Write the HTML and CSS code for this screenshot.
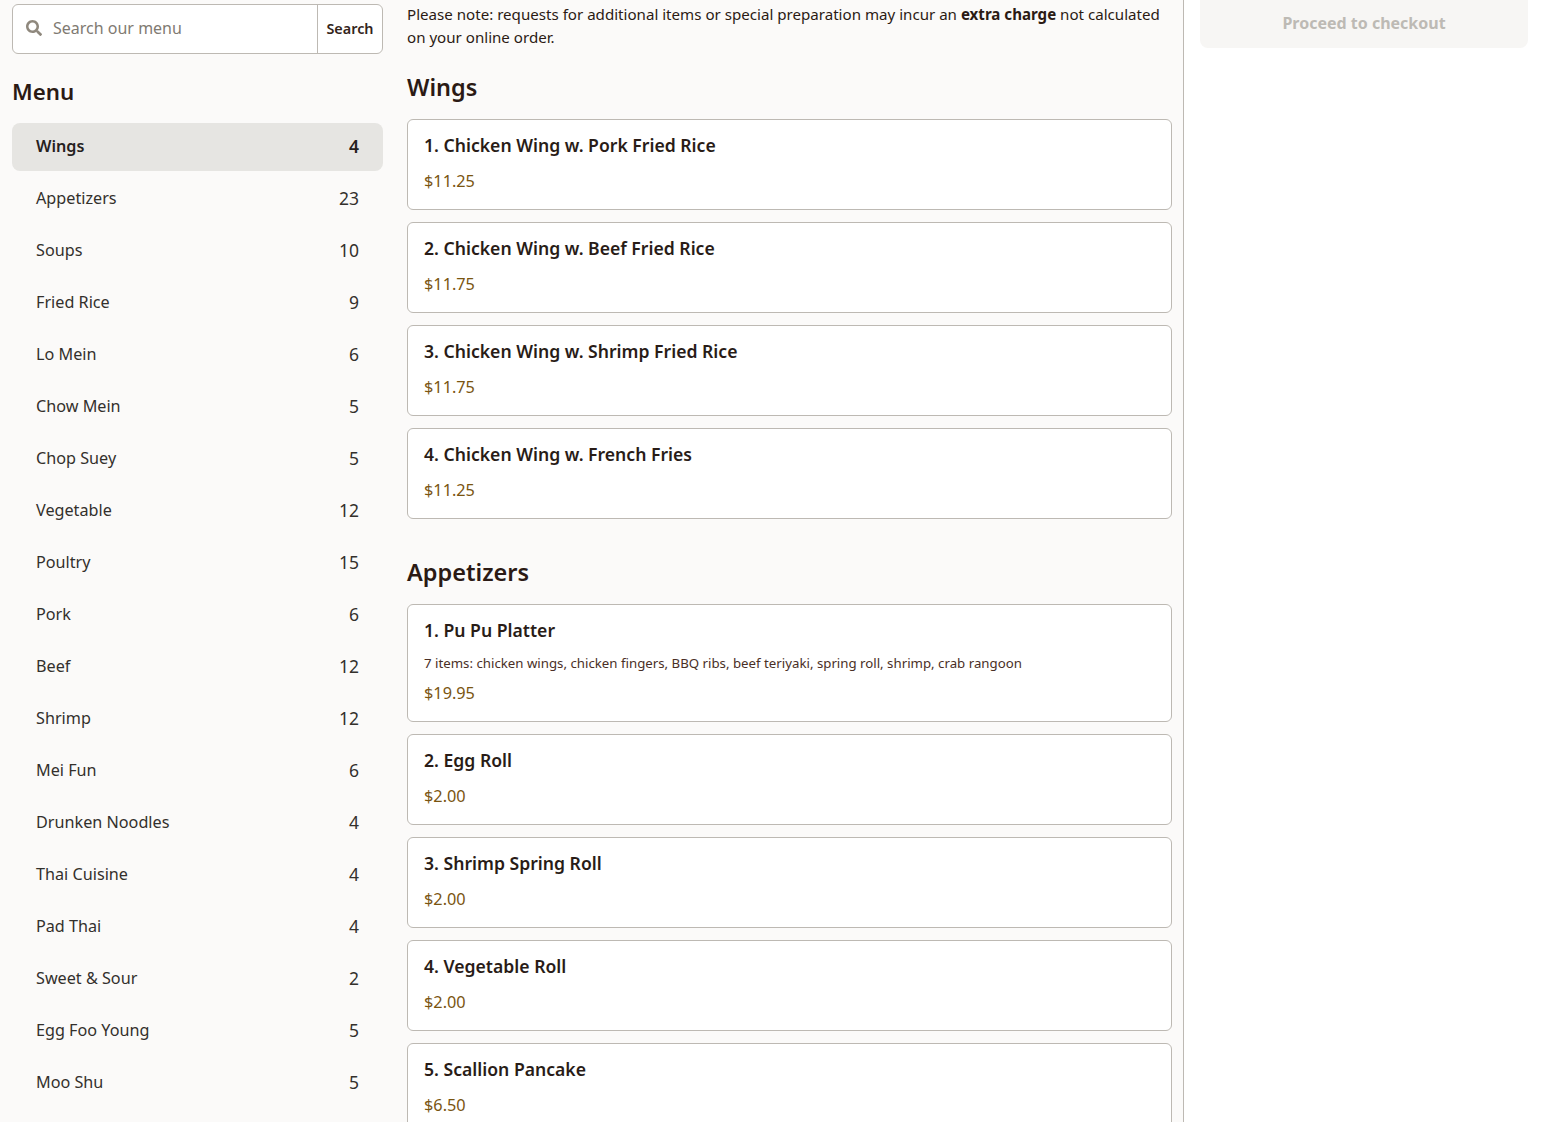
FILE: index.html
```html
<!DOCTYPE html>
<html lang="en">
<head>
<meta charset="utf-8">
<title>Menu</title>
<link rel="stylesheet" href="styles.css">
</head>
<body>
<div class="page">
  <nav class="side">
    <form class="search">
      <span class="search-field">
        <svg class="search-icon" viewBox="0 0 512 512" aria-hidden="true"><path d="M505 442.700L405.300 343c-4.500-4.500-10.600-7-17-7H372c27.600-35.300 44-79.700 44-128C416 93.100 322.900 0 208 0S0 93.100 0 208s93.100 208 208 208c48.300 0 92.700-16.400 128-44v16.300c0 6.400 2.500 12.500 7 17l99.700 99.700c9.400 9.400 24.600 9.400 33.900 0l28.300-28.300c9.400-9.400 9.400-24.600.1-34zM208 336c-70.700 0-128-57.200-128-128 0-70.700 57.200-128 128-128 70.700 0 128 57.200 128 128 0 70.700-57.200 128-128 128z"/></svg>
        <span class="placeholder">Search our menu</span>
      </span>
      <span class="search-btn">Search</span>
    </form>
    <h2 class="side-title">Menu</h2>
    <ul class="cats">
      <li class="cat active"><span>Wings</span><span class="count">4</span></li>
      <li class="cat"><span>Appetizers</span><span class="count">23</span></li>
      <li class="cat"><span>Soups</span><span class="count">10</span></li>
      <li class="cat"><span>Fried Rice</span><span class="count">9</span></li>
      <li class="cat"><span>Lo Mein</span><span class="count">6</span></li>
      <li class="cat"><span>Chow Mein</span><span class="count">5</span></li>
      <li class="cat"><span>Chop Suey</span><span class="count">5</span></li>
      <li class="cat"><span>Vegetable</span><span class="count">12</span></li>
      <li class="cat"><span>Poultry</span><span class="count">15</span></li>
      <li class="cat"><span>Pork</span><span class="count">6</span></li>
      <li class="cat"><span>Beef</span><span class="count">12</span></li>
      <li class="cat"><span>Shrimp</span><span class="count">12</span></li>
      <li class="cat"><span>Mei Fun</span><span class="count">6</span></li>
      <li class="cat"><span>Drunken Noodles</span><span class="count">4</span></li>
      <li class="cat"><span>Thai Cuisine</span><span class="count">4</span></li>
      <li class="cat"><span>Pad Thai</span><span class="count">4</span></li>
      <li class="cat"><span>Sweet &amp; Sour</span><span class="count">2</span></li>
      <li class="cat"><span>Egg Foo Young</span><span class="count">5</span></li>
      <li class="cat"><span>Moo Shu</span><span class="count">5</span></li>
    </ul>
  </nav>
  <main class="main">
    <p class="note">Please note: requests for additional items or special preparation may incur an <b>extra charge</b> not calculated on your online order.</p>
    <section class="group">
      <h2 class="group-title">Wings</h2>
      <article class="item"><h3>1. Chicken Wing w. Pork Fried Rice</h3><p class="price">$11.25</p></article>
      <article class="item"><h3>2. Chicken Wing w. Beef Fried Rice</h3><p class="price">$11.75</p></article>
      <article class="item"><h3>3. Chicken Wing w. Shrimp Fried Rice</h3><p class="price">$11.75</p></article>
      <article class="item"><h3>4. Chicken Wing w. French Fries</h3><p class="price">$11.25</p></article>
    </section>
    <section class="group">
      <h2 class="group-title">Appetizers</h2>
      <article class="item"><h3>1. Pu Pu Platter</h3><p class="desc">7 items: chicken wings, chicken fingers, BBQ ribs, beef teriyaki, spring roll, shrimp, crab rangoon</p><p class="price">$19.95</p></article>
      <article class="item"><h3>2. Egg Roll</h3><p class="price">$2.00</p></article>
      <article class="item"><h3>3. Shrimp Spring Roll</h3><p class="price">$2.00</p></article>
      <article class="item"><h3>4. Vegetable Roll</h3><p class="price">$2.00</p></article>
      <article class="item"><h3>5. Scallion Pancake</h3><p class="price">$6.50</p></article>
    </section>
  </main>
  <aside class="cart">
    <div class="checkout">Proceed to checkout</div>
  </aside>
</div>
</body>
</html>
```

FILE: styles.css
```css
* { box-sizing: border-box; }
html, body { margin: 0; height: 100%; overflow: hidden; }
body {
  background: #fbfaf9;
  color: #2b1a14;
  font-family: "Noto Sans", "Open Sans", sans-serif;
}
.page {
  display: grid;
  grid-template-columns: 371px 789px 1fr;
  height: 1122px;
  padding-left: 12px;
}
.side { padding-top: 4px; }
.search {
  display: flex;
  height: 50px;
  background: #fff;
  border: 1px solid #bdb9b3;
  border-radius: 6px;
}
.search-field { flex: 1; display: flex; align-items: center; padding-left: 13px; gap: 11px; padding-bottom: 2px; }
.search-icon { width: 16px; height: 16px; fill: #8f887d; }
.placeholder { font-size: 16px; color: #7f7a72; }
.search-btn {
  width: 65px;
  padding-bottom: 2px;
  border-left: 1px solid #bdb9b3;
  display: flex; align-items: center; justify-content: center;
  font-size: 14.400px; font-weight: 600; color: #33241a;
}
.side-title { margin: 22px 0 15px; font-size: 22.300px; line-height: 32px; font-weight: 600; }
.cats { list-style: none; margin: 0; padding: 0; display: flex; flex-direction: column; gap: 4px; }
.cat {
  height: 48px;
  padding: 0 24px 2px;
  display: flex; justify-content: space-between; align-items: center;
  font-size: 16.200px; color: #33302c; border-radius: 8px;
}
.count { font-size: 17.500px; }
.cat.active { background: #e6e5e2; font-weight: 600; color: #26211d; }
.main { margin-left: 24px; padding-top: 3px; }
.note { margin: 0; font-size: 15.120px; line-height: 23px; }
.note b { font-weight: 700; }
.group { margin-bottom: 35px; }
.group-title { margin: 20px 0 14px; font-size: 23.500px; line-height: 36px; font-weight: 600; }
.item {
  background: #fff;
  border: 1px solid #bdb9b3;
  border-radius: 6px;
  padding: 12px 16px 15px;
  margin-bottom: 12px;
  min-height: 91px;
}
.item h3 { margin: 0; font-size: 17.600px; line-height: 26px; font-weight: 600; color: #291c17; }
.desc { margin: 11px 0 0; font-size: 13.250px; line-height: 19px; color: #4a2f26; }
.price { margin: 11px 0 0; font-size: 16.300px; line-height: 24px; color: #7a5511; }
.desc + .price { margin: 8px 0 1px; }
.cart {
  margin-left: 11px;
  background: #fff;
  border-left: 1px solid #bdb9b3;
  padding: 0 16px;
}
.checkout {
  height: 48px;
  padding-bottom: 2px;
  background: #f7f6f4;
  border-radius: 0 0 8px 8px;
  display: flex; align-items: center; justify-content: center;
  font-size: 16px; font-weight: 700; color: #bdbab4;
}
```
